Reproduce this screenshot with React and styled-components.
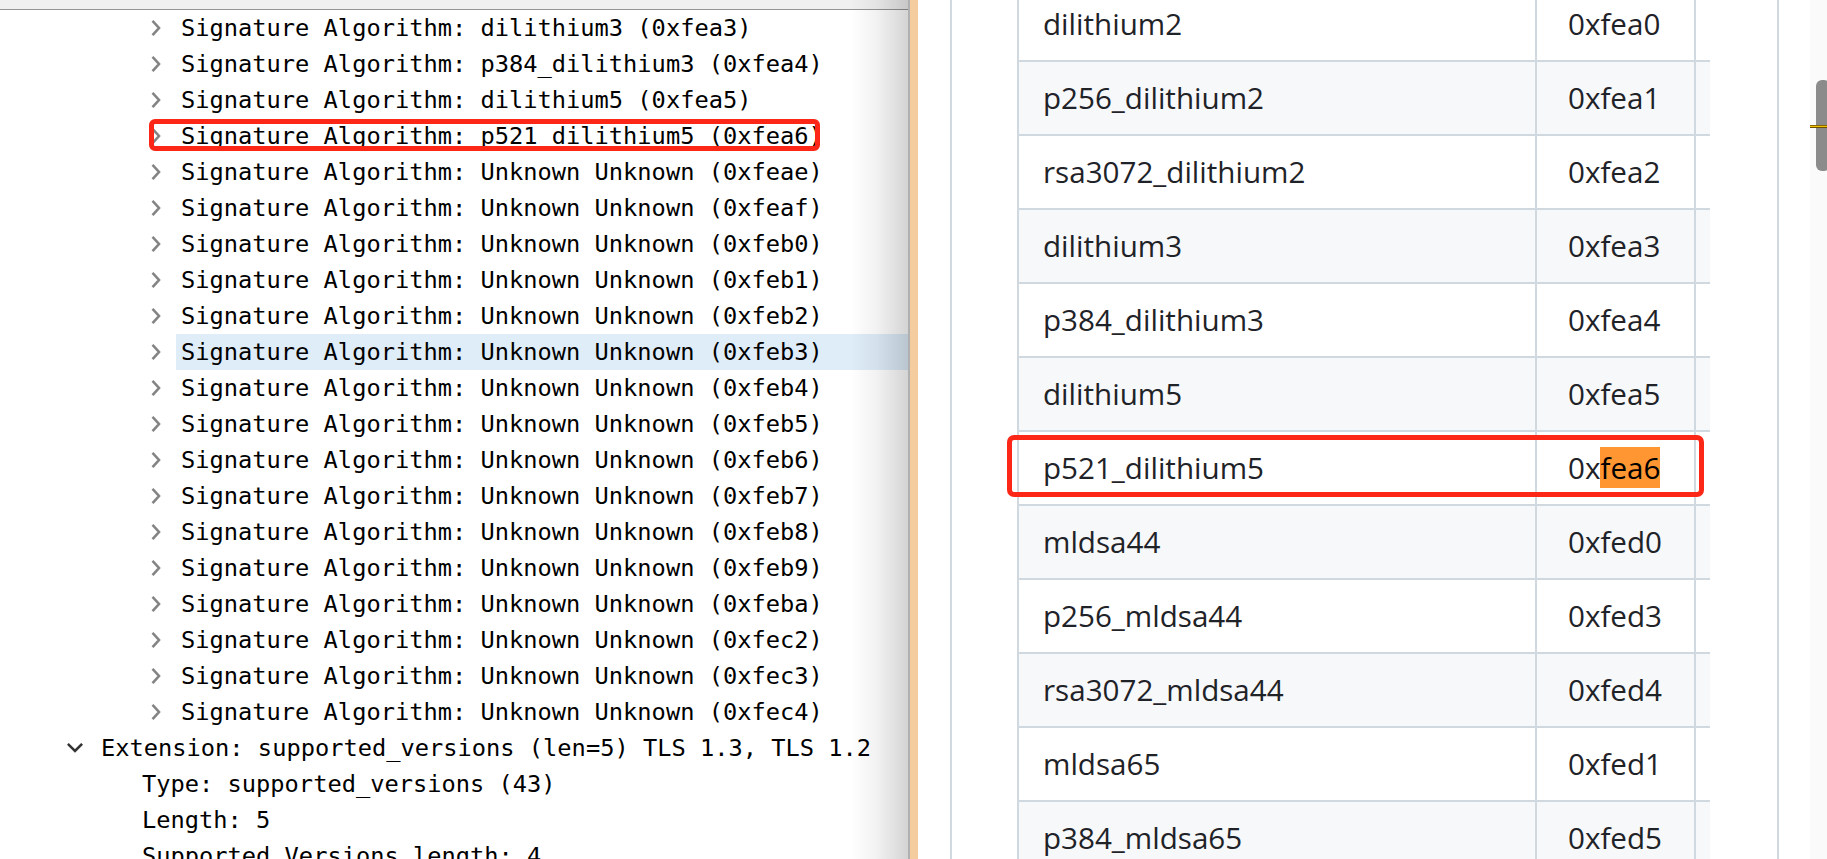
import React from "react";
import styled, { createGlobalStyle } from "styled-components";

const Global = createGlobalStyle`
  html, body { margin: 0; padding: 0; overflow: hidden; background: #fff; }
  #root { width: 1827px; height: 859px; }
`;

const Screen = styled.div`
  width: 1827px;
  height: 859px;
  display: flex;
  overflow: hidden;
  background: #fff;
`;

/* ---------- left: packet detail tree ---------- */
const LeftPane = styled.div`
  position: relative;
  width: 908px;
  flex: none;
  border-right: 2px solid #b0b0b0;
  background: #fff;
  overflow: hidden;
  display: flex;
  flex-direction: column;
  &::after {
    content: "";
    position: absolute;
    top: 0;
    right: 0;
    bottom: 0;
    width: 58px;
    pointer-events: none;
    background: linear-gradient(
      to right,
      rgba(0, 0, 0, 0) 0%,
      rgba(0, 0, 0, 0.05) 45%,
      rgba(0, 0, 0, 0.17) 100%
    );
  }
`;

const TopStrip = styled.div`
  height: 9px;
  flex: none;
  background: #f0f0f0;
  border-bottom: 1px solid #959595;
`;

const TreeRow = styled.div`
  position: relative;
  height: 36px;
  flex: none;
  display: flex;
  align-items: center;
  padding-left: ${(p) => p.$indent}px;
  font-family: "DejaVu Sans Mono", "Liberation Mono", monospace;
  font-size: 23.7px;
  line-height: 36px;
  color: #000;
  white-space: nowrap;
`;

const Twist = styled.span`
  width: ${(p) => p.$w}px;
  height: 36px;
  flex: none;
  display: flex;
  align-items: center;
`;

const Label = styled.span`
  flex: 1;
  height: 36px;
  padding-left: 5px;
  background: ${(p) => (p.$selected ? "#dfedf9" : "transparent")};
`;

const LeftMark = styled.div`
  position: absolute;
  left: 149px;
  top: 1px;
  width: 671px;
  height: 32px;
  box-sizing: border-box;
  border: 5px solid #fd2717;
  border-radius: 6px;
  pointer-events: none;
`;

const Splitter = styled.div`
  width: 8px;
  flex: none;
  background: #f5cba0;
`;

/* ---------- right: markdown table ---------- */
const RightPane = styled.div`
  flex: 1;
  display: flex;
  background: #fff;
  overflow: hidden;
`;

const Content = styled.div`
  flex: 1;
  padding: 0 31px 0 32px;
  overflow: hidden;
`;

const Article = styled.div`
  height: 100%;
  box-sizing: border-box;
  border-left: 2px solid #d1d9e0;
  border-right: 2px solid #d1d9e0;
  padding-left: 65px;
  overflow: hidden;
`;

const Table = styled.div`
  margin-top: -14px;
  font-family: "Open Sans", "Noto Sans", sans-serif;
  font-size: 29.6px;
  color: #1f2328;
`;

const Row = styled.div`
  position: relative;
  display: grid;
  grid-template-columns: 520px 159px 14px;
  width: 693px;
  height: 74px;
  box-sizing: border-box;
  border-top: 2px solid #d1d9e0;
  background: ${(p) => (p.$striped ? "#f6f8fa" : "#ffffff")};
`;

const NameCell = styled.div`
  box-sizing: border-box;
  border-left: 2px solid #d1d9e0;
  border-right: 2px solid #d1d9e0;
  padding-left: 24px;
  line-height: 72px;
  white-space: nowrap;
`;

const CodeCell = styled.div`
  box-sizing: border-box;
  border-right: 2px solid #d1d9e0;
  padding-left: 31px;
  line-height: 72px;
  white-space: nowrap;
`;

const Tail = styled.div``;

const Hit = styled.span`
  background: #ff9632;
  color: #000;
`;

const RightMark = styled.div`
  position: absolute;
  left: -10px;
  top: 3px;
  width: 697px;
  height: 62px;
  box-sizing: border-box;
  border: 5px solid #fd2717;
  border-radius: 7px;
  pointer-events: none;
`;

const Scrollbar = styled.div`
  position: relative;
  width: 17px;
  flex: none;
  background: #fafafa;
  overflow: hidden;
`;

const Thumb = styled.div`
  margin: 80px 0 0 6px;
  width: 14px;
  height: 91px;
  border-radius: 6px;
  background: #8b8b8b;
`;

const Marker = styled.div`
  position: absolute;
  left: 0;
  right: 0;
  top: 125px;
  height: 1px;
  background: #f2c200;
  border-top: 1px solid #8a6a00;
  border-bottom: 1px solid #6a5000;
`;

const ChevronRight = () => (
  <svg width="10" height="16" viewBox="0 0 10 16">
    <path
      d="M2.4 1.8 L8 8 L2.4 14.2"
      fill="none"
      stroke="#848484"
      strokeWidth="2.6"
      strokeLinecap="square"
    />
  </svg>
);

const ChevronDown = () => (
  <svg width="16" height="10" viewBox="0 0 16 10">
    <path
      d="M1.8 1.8 L8 8 L14.2 1.8"
      fill="none"
      stroke="#333"
      strokeWidth="2.6"
      strokeLinecap="square"
    />
  </svg>
);

const sigs = [
  "dilithium3 (0xfea3)",
  "p384_dilithium3 (0xfea4)",
  "dilithium5 (0xfea5)",
  "p521_dilithium5 (0xfea6)",
  "Unknown Unknown (0xfeae)",
  "Unknown Unknown (0xfeaf)",
  "Unknown Unknown (0xfeb0)",
  "Unknown Unknown (0xfeb1)",
  "Unknown Unknown (0xfeb2)",
  "Unknown Unknown (0xfeb3)",
  "Unknown Unknown (0xfeb4)",
  "Unknown Unknown (0xfeb5)",
  "Unknown Unknown (0xfeb6)",
  "Unknown Unknown (0xfeb7)",
  "Unknown Unknown (0xfeb8)",
  "Unknown Unknown (0xfeb9)",
  "Unknown Unknown (0xfeba)",
  "Unknown Unknown (0xfec2)",
  "Unknown Unknown (0xfec3)",
  "Unknown Unknown (0xfec4)",
];

const leaves = [
  "Type: supported_versions (43)",
  "Length: 5",
  "Supported Versions length: 4",
];

const algos = [
  ["dilithium2", "0xfea0"],
  ["p256_dilithium2", "0xfea1"],
  ["rsa3072_dilithium2", "0xfea2"],
  ["dilithium3", "0xfea3"],
  ["p384_dilithium3", "0xfea4"],
  ["dilithium5", "0xfea5"],
  ["p521_dilithium5", "0xfea6"],
  ["mldsa44", "0xfed0"],
  ["p256_mldsa44", "0xfed3"],
  ["rsa3072_mldsa44", "0xfed4"],
  ["mldsa65", "0xfed1"],
  ["p384_mldsa65", "0xfed5"],
];

export default function App() {
  return (
    <Screen>
      <Global />
      <LeftPane>
        <TopStrip />
        {sigs.map((s, i) => (
          <TreeRow key={s + i} $indent={151}>
            <Twist $w={25}>
              <ChevronRight />
            </Twist>
            <Label $selected={i === 9}>Signature Algorithm: {s}</Label>
            {i === 3 && <LeftMark />}
          </TreeRow>
        ))}
        <TreeRow $indent={67}>
          <Twist $w={29}>
            <ChevronDown />
          </Twist>
          <Label>Extension: supported_versions (len=5) TLS 1.3, TLS 1.2</Label>
        </TreeRow>
        {leaves.map((l) => (
          <TreeRow key={l} $indent={137}>
            <Label>{l}</Label>
          </TreeRow>
        ))}
      </LeftPane>
      <Splitter />
      <RightPane>
        <Content>
          <Article>
            <Table>
              {algos.map(([name, code], i) => (
                <Row key={name} $striped={i % 2 === 1}>
                  <NameCell>{name}</NameCell>
                  <CodeCell>
                    {code === "0xfea6" ? (
                      <>
                        0x<Hit>fea6</Hit>
                      </>
                    ) : (
                      code
                    )}
                  </CodeCell>
                  <Tail />
                  {code === "0xfea6" && <RightMark />}
                </Row>
              ))}
            </Table>
          </Article>
        </Content>
        <Scrollbar>
          <Thumb />
          <Marker />
        </Scrollbar>
      </RightPane>
    </Screen>
  );
}
